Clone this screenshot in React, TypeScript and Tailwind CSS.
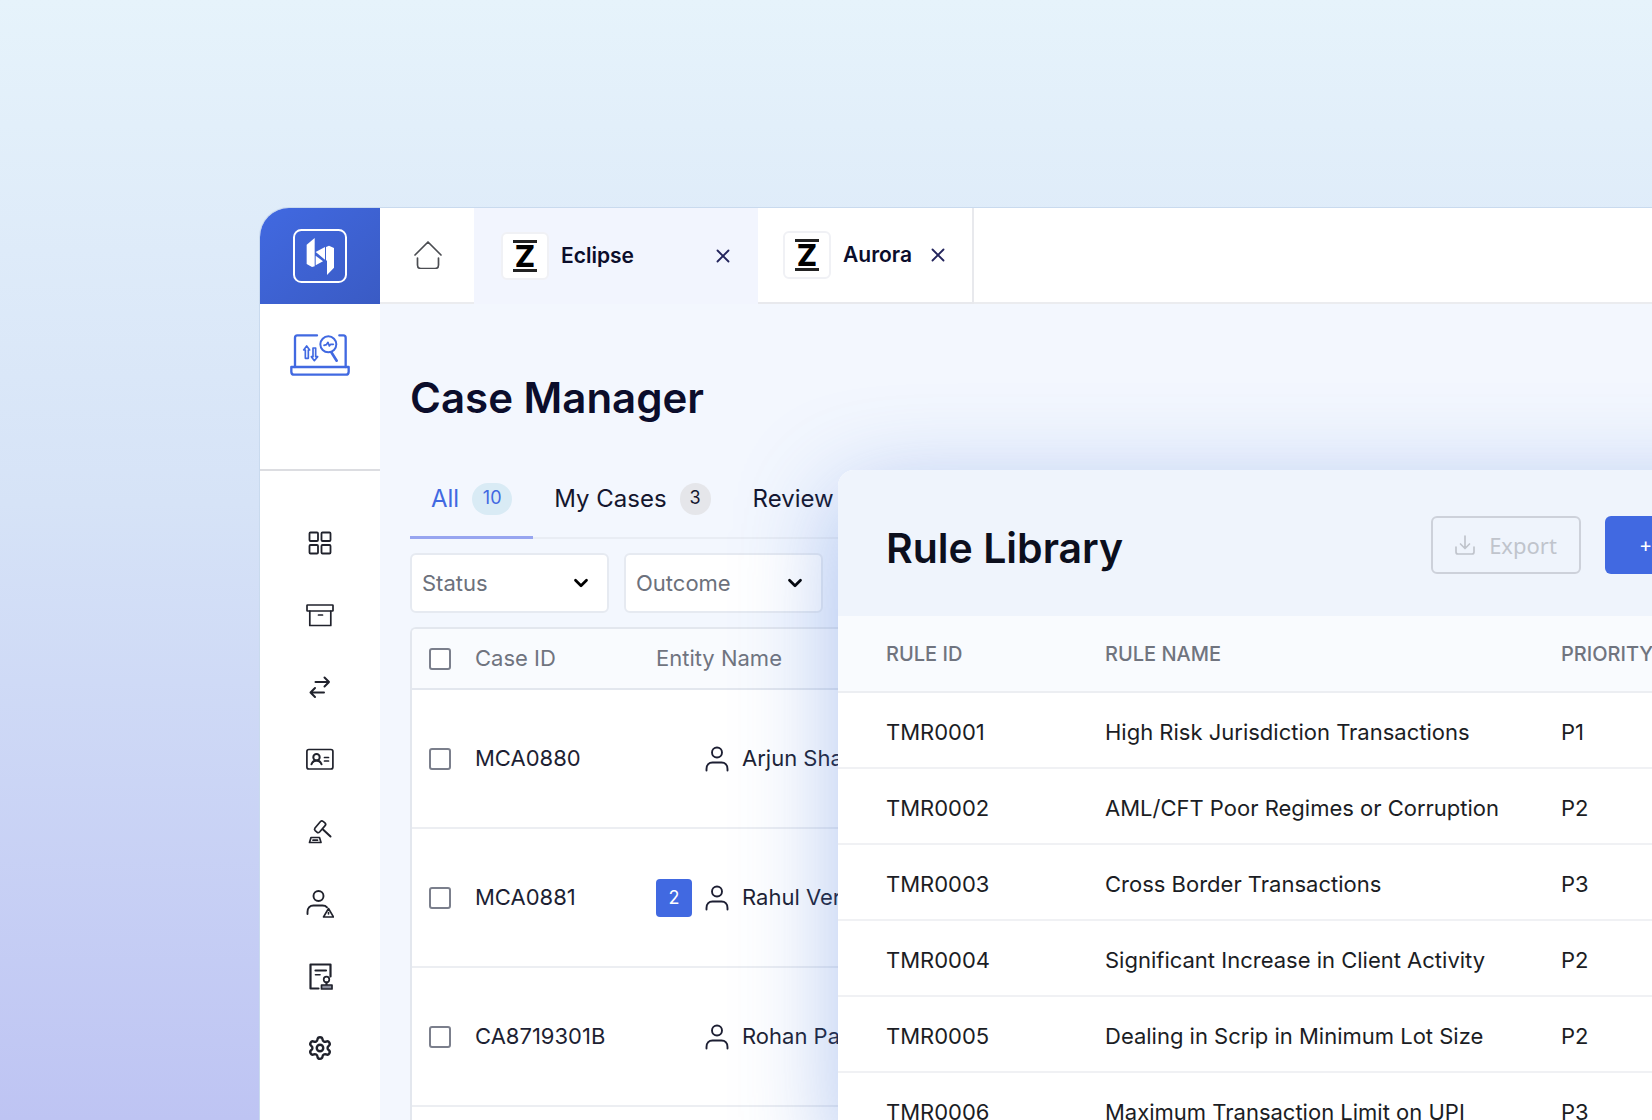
import type { ReactNode } from "react";
import { ChevronDown, Settings, X } from "lucide-react";
import { clsx } from "clsx";

interface IconProps {
  className?: string;
  children: ReactNode;
  viewBox?: string;
  strokeWidth?: number;
}

function Icon({ className = "size-7", children, viewBox = "0 0 28 28", strokeWidth = 1.7 }: IconProps) {
  return (
    <svg
      viewBox={viewBox}
      className={className}
      fill="none"
      stroke="currentColor"
      strokeWidth={strokeWidth}
      strokeLinecap="round"
      strokeLinejoin="round"
      aria-hidden="true"
    >
      {children}
    </svg>
  );
}

const navItems: { label: string; icon: ReactNode }[] = [
  {
    label: "Dashboard",
    icon: (
      <Icon strokeWidth={1.8}>
        <rect x="3.5" y="2.5" width="8.5" height="8.5" rx="1" />
        <rect x="15.5" y="2.5" width="9" height="8.5" rx="1" />
        <rect x="3.5" y="15" width="8.5" height="8.5" rx="1" />
        <rect x="15.5" y="15" width="9" height="8.5" rx="1" />
      </Icon>
    ),
  },
  {
    label: "Archive",
    icon: (
      <Icon>
        <rect x="1" y="3" width="26" height="6" rx="0.5" />
        <path d="M3.8 9v14.500h21V9M12.500 13h4" />
      </Icon>
    ),
  },
  {
    label: "Transactions",
    icon: (
      <Icon strokeWidth={2}>
        <path d="M9.500 8H23M18.500 3.500 23 8l-4.500 4.500" />
        <path d="M18 18.500H4.500M9 14l-4.500 4.500L9 23" />
      </Icon>
    ),
  },
  {
    label: "Profiles",
    icon: (
      <Icon>
        <rect x="0.9" y="3.5" width="26" height="19.500" rx="2" />
        <circle cx="10.500" cy="11.300" r="3.200" strokeWidth="2" />
        <path d="M5.500 18.300c1-3 3-3.800 5-3.800s4 .8 5 3.800" strokeWidth="2" />
        <path d="M18.500 11.500h4M18.500 15h4" />
      </Icon>
    ),
  },
  {
    label: "Rulings",
    icon: (
      <Icon>
        <path d="m9 10 5.500-6.500c.8-.8 1.800-.8 2.600-.1l1.800 1.500c.9.8 1 1.800.2 2.700L13.600 14c-.8.8-1.800.9-2.700.1l-1.700-1.500c-.8-.8-.9-1.700-.2-2.600Z" />
        <path d="m17 11.500 7.500 7" strokeWidth="2" />
        <path d="M5 19.500h8.500l1.500 5H3.500ZM7 22.200h4.500" />
      </Icon>
    ),
  },
  {
    label: "Risk users",
    icon: (
      <Icon strokeWidth={1.9}>
        <circle cx="12.500" cy="6" r="5" />
        <path d="M1.500 24v-2c0-4 2.500-6.500 6-6.500h9c2 0 3.500.6 4.500 1.800" />
        <path d="M22.500 18.500 17.500 27h10ZM22.500 22.500v1.500" strokeWidth="1.600" />
      </Icon>
    ),
  },
  {
    label: "Reports",
    icon: (
      <Icon strokeWidth={2.2}>
        <path d="M12.500 26.500H4.500V2.500h20v12M9.500 8.500h10.500" />
        <path d="M9.500 12.800H14" strokeWidth="1.600" />
        <circle cx="20.500" cy="17.500" r="2.800" strokeWidth="1.700" />
        <path d="M20.500 20.500V23" />
        <path d="M15.500 23h10.500V27h-10.500Z" fill="#8b8e9c" strokeWidth="1.700" />
      </Icon>
    ),
  },
  {
    label: "Settings",
    icon: <Settings size={28} strokeWidth={2.2} className="p-px" />,
  },
];

const cases = [
  { id: "MCA0880", name: "Arjun Sharma" },
  { id: "MCA0881", name: "Rahul Verma", count: 2 },
  { id: "CA8719301B", name: "Rohan Patel" },
];

const rules = [
  { id: "TMR0001", name: "High Risk Jurisdiction Transactions", priority: "P1" },
  { id: "TMR0002", name: "AML/CFT Poor Regimes or Corruption", priority: "P2" },
  { id: "TMR0003", name: "Cross Border Transactions", priority: "P3" },
  { id: "TMR0004", name: "Significant Increase in Client Activity", priority: "P2" },
  { id: "TMR0005", name: "Dealing in Scrip in Minimum Lot Size", priority: "P2" },
  { id: "TMR0006", name: "Maximum Transaction Limit on UPI", priority: "P3" },
];

const caseTabs = [
  { label: "All", count: 10, active: true },
  { label: "My Cases", count: 3 },
  { label: "Review" },
];

function Logo() {
  return (
    <svg viewBox="0 0 162 162" className="size-[54px]" fill="none" role="img" aria-label="Logo">
      <rect x="3" y="3" width="156" height="156" rx="22" stroke="white" strokeWidth="6" />
      <g fill="white">
        <path d="M41 47 65 27v85l-8 2-16-9Z" />
        <path d="M68 69 96 54v38Z" />
        <path d="M68 80 90 97 68 109Z" />
        <path d="M99 54 108 50l15 7v59l-21 22V96l-3-3Z" />
      </g>
    </svg>
  );
}

function LaptopIcon() {
  return (
    <svg
      viewBox="0 0 180 126"
      className="h-[42px] w-[60px]"
      fill="none"
      stroke="#4169e1"
      strokeWidth="7"
      strokeLinecap="round"
      strokeLinejoin="round"
      aria-hidden="true"
    >
      <path d="M81 4H22q-7 0-7 7v88M148 4h12q7 0 7 7v88" />
      <path d="M4 99h172v14q0 9-9 9H13q-9 0-9-9Z" />
      <circle cx="115" cy="31" r="24" strokeWidth="6" />
      <path d="m124 55 16 25" strokeWidth="8" />
      <path d="m102 34 7-2 5-7 4 11 4-5h8" strokeWidth="5" />
      <path d="M46 73V48h-5l9-12 9 12h-4v25Z" strokeWidth="5" />
      <path d="M69 42h8v26h6l-10 12-9-12h5Z" strokeWidth="5" />
    </svg>
  );
}

function UserIcon() {
  return (
    <Icon viewBox="0 0 24 26" className="h-[26px] w-6 shrink-0" strokeWidth={1.9}>
      <circle cx="12" cy="6.500" r="5" />
      <path d="M1.500 24.500v-1.500c0-4 2.500-6.500 6-6.500h9c3.500 0 6 2.500 6 6.500v1.500" />
    </Icon>
  );
}

function Workspace({ name }: { name: string }) {
  return (
    <>
      <span className="flex size-12 items-center justify-center rounded-md border-2 border-[#f0f1f5] bg-white">
        <span className="flex h-8 w-6 items-center justify-center border-y-[3px] border-[#222] text-[30px] leading-none font-extrabold text-black">
          Z
        </span>
      </span>
      <span className="ml-3 text-[21px] font-semibold text-[#0b0d2b]">{name}</span>
    </>
  );
}

function CloseButton({ label, className }: { label: string; className?: string }) {
  return (
    <button type="button" aria-label={label} className={clsx("text-[#23245c]", className)}>
      <X size={22} strokeWidth={2} />
    </button>
  );
}

function Checkbox({ label }: { label: string }) {
  return (
    <input
      type="checkbox"
      aria-label={label}
      className="block size-[22px] appearance-none rounded-[3px] border-2 border-[#7b7f8c] bg-white checked:bg-[#4169e1]"
    />
  );
}

function FilterSelect({ label }: { label: string }) {
  return (
    <div className="grid w-[199px] items-center">
      <select
        aria-label={label}
        className="col-start-1 row-start-1 h-15 appearance-none rounded-md border-2 border-[#e6eaf1] bg-white pl-[10px] text-[22px] text-[#6c717c]"
      >
        <option>{label}</option>
      </select>
      <ChevronDown
        size={22}
        strokeWidth={3}
        className="pointer-events-none col-start-1 row-start-1 mr-[17px] justify-self-end text-black"
      />
    </div>
  );
}

function Sidebar() {
  return (
    <aside className="flex w-[120px] shrink-0 flex-col bg-white">
      <div className="flex h-24 shrink-0 items-center justify-center bg-linear-to-br from-[#4169e1] to-[#3a5bc4]">
        <Logo />
      </div>
      <div className="flex h-[167px] shrink-0 items-start justify-center border-b-2 border-[#dcdde1] pt-[30px]">
        <LaptopIcon />
      </div>
      <nav className="flex flex-col items-center gap-[44px] pt-[59px] text-[#20222c]">
        {navItems.map((item) => (
          <a key={item.label} href="#" aria-label={item.label}>
            {item.icon}
          </a>
        ))}
      </nav>
    </aside>
  );
}

function TopBar() {
  return (
    <header className="flex h-24 shrink-0">
      <a
        href="#"
        aria-label="Home"
        className="flex w-[94px] items-center justify-center border-b-2 border-[#ebecef] bg-white pl-[2px] text-[#4b4d52]"
      >
        <Icon>
          <path d="M1 14 14 1l13 13M3.500 17v7q0 3.500 3.500 3.500h14q3.500 0 3.500-3.500v-7" />
        </Icon>
      </a>
      <div className="flex w-[284px] items-center bg-[#f2f5fe] pr-6 pl-[27px]">
        <Workspace name="Eclipse" />
        <CloseButton label="Close Eclipse" className="ml-auto" />
      </div>
      <div className="flex items-center border-r-2 border-b-2 border-[#e8e9ed] bg-white pr-[23px] pl-[25px]">
        <Workspace name="Aurora" />
        <CloseButton label="Close Aurora" className="ml-[15px]" />
      </div>
      <div className="flex-1 border-b-2 border-[#ebecef] bg-white" />
    </header>
  );
}

function CaseManager() {
  return (
    <main className="flex flex-1 flex-col pt-[66px] pl-[30px]">
      <h1 className="text-[42px] leading-[56px] font-semibold text-[#0b0d2b]">Case Manager</h1>
      <div className="mt-[45px] flex border-b-2 border-[#e9edf4] text-2xl" role="tablist">
        {caseTabs.map((tab) => (
          <button
            key={tab.label}
            type="button"
            role="tab"
            aria-selected={Boolean(tab.active)}
            className={clsx(
              "-mb-[2px] flex h-[68px] items-start gap-[13px] border-b-3 px-[21px] pt-3 leading-8",
              tab.active ? "border-[#97a5f0] text-[#4169e1]" : "border-transparent text-[#14162e]",
            )}
          >
            {tab.label}
            {tab.count && (
              <span
                className={clsx(
                  "h-8 rounded-full text-center text-lg leading-[30px]",
                  tab.active ? "w-10 bg-[#d9ebf5]" : "w-[31px] bg-[#e5e6ea]",
                )}
              >
                {tab.count}
              </span>
            )}
          </button>
        ))}
      </div>
      <div className="mt-[14px] flex gap-[15px]">
        <FilterSelect label="Status" />
        <FilterSelect label="Outcome" />
      </div>
      <div className="mt-[14px] flex-1 overflow-hidden rounded-tl-md border-t-2 border-l-2 border-[#e3e7ee] bg-white">
        <table className="w-full table-fixed text-left text-[22px] text-[#1d1f33]">
          <colgroup>
            <col className="w-[63px]" />
            <col className="w-[181px]" />
            <col />
          </colgroup>
          <thead>
            <tr className="h-[60px] border-b-2 border-[#e3e7ee] bg-[#f9fbfe] text-[#70747f]">
              <th className="pl-[17px]">
                <Checkbox label="Select all cases" />
              </th>
              <th className="font-normal">Case ID</th>
              <th className="font-normal">Entity Name</th>
            </tr>
          </thead>
          <tbody>
            {cases.map((row) => (
              <tr key={row.id} className="h-[139px] border-b-2 border-[#eceef2] bg-white">
                <td className="pl-[17px]">
                  <Checkbox label={`Select ${row.id}`} />
                </td>
                <td>{row.id}</td>
                <td>
                  <div className="flex items-center">
                    <span className="mr-[13px] w-9 shrink-0">
                      {row.count && (
                        <span className="flex h-[38px] items-center justify-center rounded-sm bg-[#4169e1] text-lg text-white">
                          {row.count}
                        </span>
                      )}
                    </span>
                    <UserIcon />
                    <span className="ml-[13px]">{row.name}</span>
                  </div>
                </td>
              </tr>
            ))}
          </tbody>
        </table>
      </div>
    </main>
  );
}

function RuleLibrary() {
  return (
    <section className="absolute top-[262px] -right-40 left-[578px] overflow-hidden rounded-tl-2xl bg-white shadow-[0_24px_100px_rgba(65,115,217,0.42)]">
      <div className="flex h-[146px] items-center bg-[#eff4fc] pt-1 pr-[47px] pl-12">
        <h2 className="pt-2 text-[41px] font-semibold text-[#0c0f1d]">Rule Library</h2>
        <button
          type="button"
          disabled
          className="ml-auto flex h-[58px] w-[150px] items-center justify-center gap-[14px] rounded-md border-2 border-[#cdd1da] font-['Noto_Sans'] text-[22px] text-[#c0c4cc]"
        >
          <Icon viewBox="0 0 20 20" className="size-5">
            <path d="M10 1v12M5.500 9l4.500 4.500L14.500 9M1 12v5q0 2 2 2h14q2 0 2-2v-5" />
          </Icon>
          Export
        </button>
        <button
          type="button"
          aria-label="Add rule"
          className="ml-6 h-[58px] w-[160px] rounded-md bg-[#4169e1] pl-[34px] text-left text-xl text-white"
        >
          +
        </button>
      </div>
      <table className="w-full table-fixed text-left text-[22px] text-[#1b1d24]">
        <colgroup>
          <col className="w-[267px]" />
          <col className="w-[456px]" />
          <col />
        </colgroup>
        <thead>
          <tr className="h-[76px] border-b-2 border-[#eceef2] bg-[#f9fbfe] text-xl text-[#70747f]">
            <th className="pl-12 font-medium">RULE ID</th>
            <th className="font-medium">RULE NAME</th>
            <th className="font-medium">PRIORITY</th>
          </tr>
        </thead>
        <tbody>
          {rules.map((rule) => (
            <tr key={rule.id} className="h-[76px] border-b-2 border-[#f0f1f4] *:pt-1">
              <td className="pl-12">{rule.id}</td>
              <td>{rule.name}</td>
              <td>{rule.priority}</td>
            </tr>
          ))}
        </tbody>
      </table>
    </section>
  );
}

export default function App() {
  return (
    <div className="flex h-screen overflow-hidden bg-linear-to-b from-[#e6f3fb] via-[#d6e3f7] via-45% to-[#bec4f3] pt-[207px] pl-[259px] font-['Inter',sans-serif]">
      <div className="relative flex flex-1 overflow-hidden rounded-tl-[30px] border-t border-l border-[#c9daee] bg-[#f3f7fe]">
        <Sidebar />
        <div className="flex flex-1 flex-col">
          <TopBar />
          <CaseManager />
        </div>
        <RuleLibrary />
      </div>
    </div>
  );
}
